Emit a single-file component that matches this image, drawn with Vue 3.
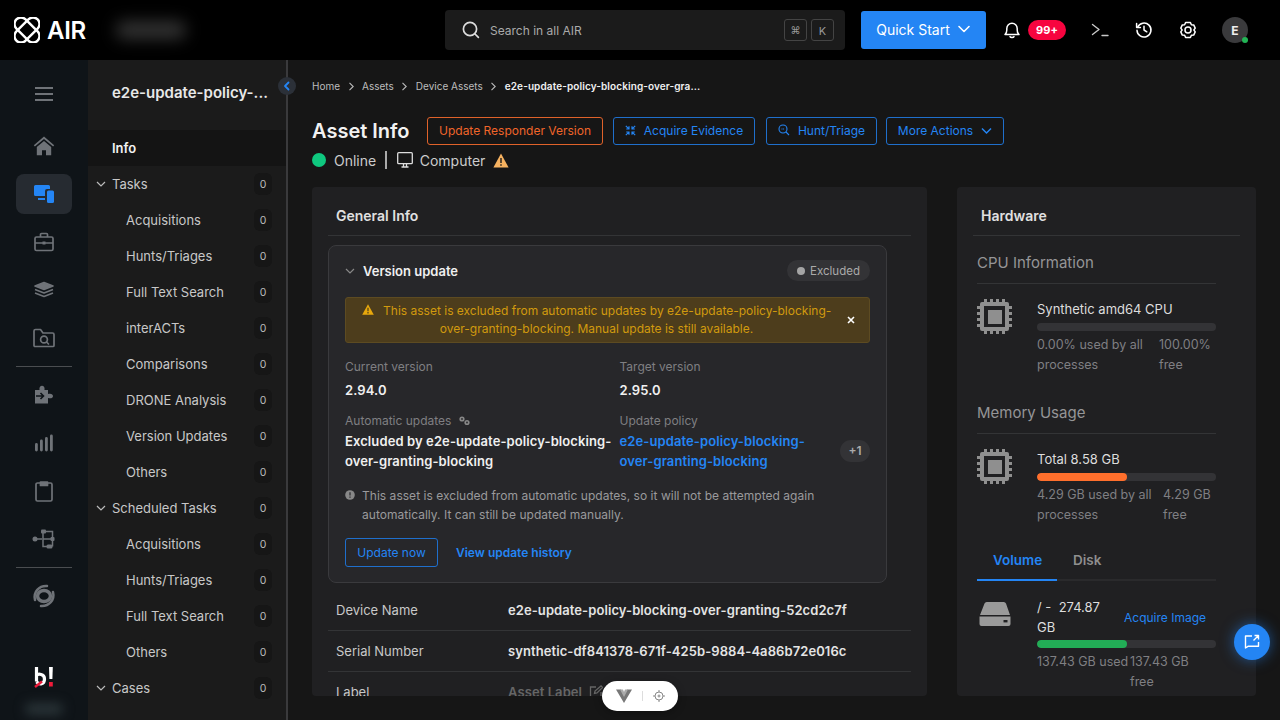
<script setup>
const taskGroups = [
  { title: 'Tasks', items: ['Acquisitions', 'Hunts/Triages', 'Full Text Search', 'interACTs', 'Comparisons', 'DRONE Analysis', 'Version Updates', 'Others'] },
  { title: 'Scheduled Tasks', items: ['Acquisitions', 'Hunts/Triages', 'Full Text Search', 'Others'] },
  { title: 'Cases', items: [] },
]
const crumbs = ['Home', 'Assets', 'Device Assets']
</script>

<template>
  <div class="app">
    <header class="topbar">
      <div class="brand">
        <svg width="26" height="26" viewBox="0 0 26 26" fill="none" stroke="#fff" stroke-width="2.4">
          <rect x="-2" y="6.500" width="30" height="13" rx="6.500" transform="rotate(45 13 13)" />
          <rect x="-2" y="6.500" width="30" height="13" rx="6.500" transform="rotate(-45 13 13)" />
          <path d="M9 13l4-4" stroke="#000" stroke-width="1.600" />
          <path d="M13 17l4-4" stroke="#000" stroke-width="1.600" />
        </svg>
        <span class="brand-name">AIR</span>
      </div>
      <div class="org-blur"></div>
      <div class="search">
        <svg class="search-icon" width="20" height="20" viewBox="0 0 20 20" fill="none" stroke="#ddd" stroke-width="1.7" stroke-linecap="round">
          <circle cx="9" cy="9" r="6.6" /><path d="M14 14l3.4 3.4" />
        </svg>
        <span class="search-text">Search in all AIR</span>
        <kbd class="key">⌘</kbd>
        <kbd class="key key-k">K</kbd>
      </div>
      <button class="quick">
        Quick Start
        <svg width="14" height="14" viewBox="0 0 14 14" fill="none" stroke="#fff" stroke-width="1.6" stroke-linecap="round" stroke-linejoin="round"><path d="M2 4.5L7 9.5L12 4.5" /></svg>
      </button>
      <div class="top-icons">
        <svg class="bell" width="18" height="18" viewBox="0 0 18 18" fill="none" stroke="#fff" stroke-width="1.5" stroke-linejoin="round">
          <path d="M2 13.6c1.2-1 1.8-2 1.8-4.6V7.4a5.2 5.2 0 0 1 10.4 0V9c0 2.6.6 3.6 1.8 4.6z" /><path d="M7 15.6c.6 1.2 3.4 1.2 4 0" stroke-linecap="round" />
        </svg>
        <span class="notif">99+</span>
        <svg class="term" width="18" height="16" viewBox="0 0 18 16" fill="none" stroke="#c8c8c8" stroke-width="1.4" stroke-linecap="round" stroke-linejoin="round"><path d="M1.5 2.5L8 7.5L1.5 12.5" /><path d="M11 13.5h6" /></svg>
        <svg class="hist" width="18" height="18" viewBox="0 0 18 18" fill="none" stroke="#fff" stroke-width="1.5" stroke-linecap="round" stroke-linejoin="round"><path d="M2.6 6.2A7 7 0 1 1 2 9.2" /><path d="M1.6 2.6v3.8h3.8" /><path d="M9 5.2V9l2.8 1.8" /></svg>
        <svg class="gear" width="18" height="18" viewBox="0 0 18 18" fill="none" stroke="#fff" stroke-width="1.5" stroke-linejoin="round"><path d="M6.6 1.6h4.8l1 2.1 2.3.2 1.5 3.2-1.3 1.9 1.3 1.9-1.5 3.2-2.3.2-1 2.1H6.600l-1-2.100-2.300-.2-1.500-3.200L3.100 9 1.800 7.100l1.500-3.200 2.300-.2z" /><circle cx="9" cy="9" r="3" /></svg>
        <div class="avatar">E<i class="avatar-dot"></i></div>
      </div>
    </header>

    <div class="body">
      <nav class="rail">
        <div class="rail-item rail-burger">
          <svg width="20" height="16" viewBox="0 0 20 16" fill="none" stroke="#6f7378" stroke-width="1.8"><path d="M1 2h18M1 8h18M1 14h18" /></svg>
        </div>
        <div class="rail-item">
          <svg width="22" height="20" viewBox="0 0 22 20" fill="#6f7378"><path d="M11 0.500L0.800 9.300l1.100 1.300L11 2.900l9.100 7.700 1.100-1.300z" /><path d="M3.800 11L11 4.900 18.200 11v8.200h-5.200v-5h-4v5H3.800z" /></svg>
        </div>
        <div class="rail-item active">
          <svg width="22" height="20" viewBox="0 0 22 20" fill="#2485f4"><path d="M1 2.500A1.500 1.500 0 0 1 2.500 1h13A1.500 1.500 0 0 1 17 2.500V5h-3a2 2 0 0 0-2 2v5H2.500A1.500 1.500 0 0 1 1 10.500z" /><rect x="5" y="14" width="7" height="2" /><rect x="14" y="6.500" width="7" height="12.500" rx="1.500" /></svg>
        </div>
        <div class="rail-item">
          <svg width="20" height="20" viewBox="0 0 20 20" fill="none" stroke="#6f7378" stroke-width="1.7"><rect x="1" y="5" width="18" height="13.500" rx="1.500" /><path d="M6.500 5V2.500a1 1 0 0 1 1-1h5a1 1 0 0 1 1 1V5M1 11h18" /><path d="M8.500 11h3" stroke-width="3" /></svg>
        </div>
        <div class="rail-item">
          <svg width="20" height="20" viewBox="0 0 20 20" fill="none" stroke="#6f7378" stroke-width="1.600" stroke-linejoin="round"><path d="M10 2.500l9 3.500-9 3.500-9-3.500z" fill="#6f7378" /><path d="M1 9.500l9 3.500 9-3.500M1 13l9 3.500L19 13" /></svg>
        </div>
        <div class="rail-item">
          <svg width="22" height="20" viewBox="0 0 22 20" fill="none" stroke="#6f7378" stroke-width="1.700" stroke-linejoin="round"><path d="M1 3a1.500 1.500 0 0 1 1.500-1.500h5L10 5h9.500A1.500 1.500 0 0 1 21 6.500v11a1 1 0 0 1-1 1H2a1 1 0 0 1-1-1z" /><circle cx="11" cy="11.500" r="3.400" /><path d="M13.500 14l2 2" stroke-linecap="round" /></svg>
        </div>
        <div class="rail-sep"></div>
        <div class="rail-item">
          <svg width="20" height="20" viewBox="0 0 20 20" fill="#6f7378"><path d="M1 5h4.500C5 2 6.500.800 8 .800S11 2 10.500 5H14v4c3-1 5 .300 5 2s-2 3-5 2v5.500H1z" /><path d="M2 11h7M6.500 8l3 3-3 3" fill="none" stroke="#0f1418" stroke-width="1.600" /></svg>
        </div>
        <div class="rail-item">
          <svg width="20" height="20" viewBox="0 0 20 20" fill="#6f7378"><rect x="1" y="10" width="2.800" height="8.500" rx="1.400" /><rect x="6" y="6.500" width="2.800" height="12" rx="1.400" /><rect x="11" y="4" width="2.800" height="14.500" rx="1.400" /><rect x="16" y="1.500" width="2.800" height="17" rx="1.400" /></svg>
        </div>
        <div class="rail-item">
          <svg width="18" height="22" viewBox="0 0 18 22" fill="none" stroke="#6f7378" stroke-width="1.700" stroke-linejoin="round"><path d="M5 3H2.500A1.500 1.500 0 0 0 1 4.500v15A1.500 1.500 0 0 0 2.500 21h13a1.500 1.500 0 0 0 1.500-1.500v-15A1.500 1.500 0 0 0 15.500 3H13" /><path d="M5.500 2h7v3.500h-7z" fill="#6f7378" /></svg>
        </div>
        <div class="rail-item">
          <svg width="24" height="20" viewBox="0 0 24 20" fill="none" stroke="#6f7378" stroke-width="1.500"><path d="M3 10h7M13 2.500h7.500V9M11 2.500V17.500h5M11 10h10M20.500 10v7.500" /><g fill="#6f7378" stroke="none"><circle cx="3" cy="10" r="2.500" /><rect x="9" y="0.500" width="5" height="4" rx="1" /><rect x="18.500" y="8" width="4" height="4" rx="1" /><rect x="14.500" y="15.500" width="6" height="4" rx="1.500" /></g></svg>
        </div>
        <div class="rail-sep"></div>
        <div class="rail-item">
          <svg width="24" height="24" viewBox="0 0 24 24" fill="none" stroke="#6f7378" stroke-linecap="round"><path d="M3 16C1 8 7 1.500 15 2" stroke-width="2.500" /><path d="M21 8c2 8-4 14.500-12 14" stroke-width="2.500" /><ellipse cx="12" cy="12" rx="6.500" ry="5.500" stroke-width="3.500" /></svg>
        </div>
        <div class="rail-logo">
          <svg width="20" height="22" viewBox="0 0 20 22"><path d="M2.500 1v14.500M2.500 9.500c1.500-2 8-2 8 3.500s-5 6-8 2.800" fill="none" stroke="#fff" stroke-width="3.200" /><path d="M15 1h3.800l-.400 12h-3z" fill="#fff" /><rect x="15" y="16" width="3.800" height="4.500" fill="#ef1b3a" /><path d="M1 21l7-5.500" stroke="#ef1b3a" stroke-width="2.400" /></svg>
        </div>
        <div class="rail-blur"></div>
      </nav>

      <aside class="side">
        <div class="side-title">e2e-update-policy-...</div>
        <div class="side-info">Info</div>
        <template v-for="group in taskGroups" :key="group.title">
          <div class="side-row side-group">
            <svg width="10" height="10" viewBox="0 0 10 10" fill="none" stroke="#bbb" stroke-width="1.200"><path d="M1 3l4 4 4-4" /></svg>
            <span class="side-label">{{ group.title }}</span>
            <span class="count">0</span>
          </div>
          <div v-for="item in group.items" :key="item" class="side-row side-child">
            <span class="side-label">{{ item }}</span>
            <span class="count">0</span>
          </div>
        </template>
        <button class="collapse">
          <svg width="8" height="10" viewBox="0 0 8 10" fill="none" stroke="#2485f4" stroke-width="1.800" stroke-linecap="round" stroke-linejoin="round"><path d="M5.500 1.500L2 5l3.500 3.500" /></svg>
        </button>
      </aside>

      <main class="main">
        <div class="crumbs">
          <template v-for="c in crumbs" :key="c">
            <span>{{ c }}</span>
            <svg width="7" height="9" viewBox="0 0 7 9" fill="none" stroke="#bbb" stroke-width="1.100"><path d="M1.500 .8L5.200 4.500 1.500 8.200" /></svg>
          </template>
          <b>e2e-update-policy-blocking-over-gra...</b>
        </div>

        <div class="title-row">
          <h1>Asset Info</h1>
          <button class="btn btn-orange">Update Responder Version</button>
          <button class="btn btn-blue">
            <svg width="11" height="11" viewBox="0 0 11 11" fill="none" stroke="#2485f4" stroke-width="1.200"><path d="M.8 .8l2.800 2.800M4 1.200V4H1.200M10.200 .8L7.400 3.600M7 1.200V4h2.800M.8 10.200l2.800-2.800M4 9.800V7H1.200M10.200 10.200L7.400 7.400M7 9.800V7h2.800" /></svg>
            Acquire Evidence
          </button>
          <button class="btn btn-blue btn-hunt">
            <svg width="12" height="12" viewBox="0 0 12 12" fill="none" stroke="#2485f4" stroke-width="1.100"><circle cx="5" cy="5" r="4" /><path d="M8 8l3 3" /><path d="M3.500 5h3" stroke-dasharray="1 .6" /></svg>
            Hunt/Triage
          </button>
          <button class="btn btn-blue btn-more">
            More Actions
            <svg width="11" height="11" viewBox="0 0 11 11" fill="none" stroke="#2485f4" stroke-width="1.500"><path d="M1 3.500l4.500 4.500L10 3.500" /></svg>
          </button>
        </div>

        <div class="status-row">
          <i class="online-dot"></i>
          <span>Online</span>
          <i class="status-sep"></i>
          <svg width="16" height="16" viewBox="0 0 16 16" fill="none" stroke="#ddd" stroke-width="1.300"><rect x=".7" y=".7" width="14.600" height="11" rx="1" /><path d="M4.500 15h7M6.500 12v2.500M9.500 12v2.500" /></svg>
          <span>Computer</span>
          <svg width="16" height="15" viewBox="0 0 16 15"><path d="M8 .5l7.600 14H.4z" fill="#f6b260" /><path d="M8 5v5M8 11.200v1.500" stroke="#1a1a1a" stroke-width="1.400" /></svg>
        </div>

        <div class="cards">
          <section class="card general">
            <h2 class="card-title">General Info</h2>
            <div class="version-box">
              <div class="version-head">
                <svg width="10" height="10" viewBox="0 0 10 10" fill="none" stroke="#888" stroke-width="1.200"><path d="M1 3l4 4 4-4" /></svg>
                <strong>Version update</strong>
                <span class="pill"><i></i>Excluded</span>
              </div>
              <div class="alert">
                <p>
                  <svg width="12" height="11" viewBox="0 0 12 11"><path d="M6 .3l5.800 10.400H.2z" fill="#e8a80c" /><path d="M6 3.800v3.400M6 8v1.400" stroke="#4b3c1c" stroke-width="1.200" /></svg>
                  This asset is excluded from automatic updates by e2e-update-policy-blocking-over-granting-blocking. Manual update is still available.
                </p>
                <svg class="alert-x" width="8" height="8" viewBox="0 0 8 8" stroke="#fff" stroke-width="1.600"><path d="M1 1l6 6M7 1L1 7" /></svg>
              </div>
              <div class="version-grid">
                <div>
                  <div class="v-label">Current version</div>
                  <div class="v-value">2.94.0</div>
                </div>
                <div>
                  <div class="v-label">Target version</div>
                  <div class="v-value">2.95.0</div>
                </div>
                <div>
                  <div class="v-label">Automatic updates
                    <svg class="cogs" width="11" height="10" viewBox="0 0 11 10" fill="#888"><circle cx="3" cy="3" r="2.600" /><circle cx="8" cy="6.500" r="2.600" /><circle cx="3" cy="3" r=".9" fill="#27272a" /><circle cx="8" cy="6.500" r=".9" fill="#27272a" /></svg>
                  </div>
                  <div class="v-text">Excluded by e2e-update-policy-blocking-over-granting-blocking</div>
                </div>
                <div class="policy">
                  <div class="v-label">Update policy</div>
                  <div class="policy-row">
                    <a class="v-text v-link">e2e-update-policy-blocking-over-granting-blocking</a>
                    <span class="plus">+1</span>
                  </div>
                </div>
              </div>
              <div class="note">
                <svg width="10" height="10" viewBox="0 0 10 10"><circle cx="5" cy="5" r="4.800" fill="#888" /><path d="M5 2.300v3.200M5 6.500v1.300" stroke="#27272a" stroke-width="1.200" /></svg>
                <p>This asset is excluded from automatic updates, so it will not be attempted again automatically. It can still be updated manually.</p>
              </div>
              <div class="version-actions">
                <button class="update-now">Update now</button>
                <a class="history">View update history</a>
              </div>
            </div>
            <div class="info-row">
              <span>Device Name</span><b>e2e-update-policy-blocking-over-granting-52cd2c7f</b>
            </div>
            <div class="info-row">
              <span>Serial Number</span><b>synthetic-df841378-671f-425b-9884-4a86b72e016c</b>
            </div>
            <div class="info-row info-last">
              <span>Label</span>
              <b class="muted">Asset Label
                <svg width="14" height="14" viewBox="0 0 14 14" fill="none" stroke="#666" stroke-width="1.300"><path d="M7 2H1.500v10.500H12V7" /><path d="M5.500 8.500l.5-2.500 6-5 1.500 1.500-5.500 5.500z" /></svg>
              </b>
            </div>
          </section>

          <section class="card hardware">
            <h2 class="card-title">Hardware</h2>
            <div class="hw-inner">
              <h3>CPU Information</h3>
              <div class="hw-item">
                <svg class="chip" width="36" height="36" viewBox="0 0 36 36" fill="#8f8f8f"><path fill-rule="evenodd" d="M3 5a2 2 0 0 1 2-2h25a2 2 0 0 1 2 2v25a2 2 0 0 1-2 2H5a2 2 0 0 1-2-2zM7 7v21h21V7z" /><rect x="11" y="11" width="14" height="14" /><path d="M7 0h3v4H7zM13 0h3v4h-3zM19 0h3v4h-3zM25 0h3v4h-3zM7 31h3v4H7zM13 31h3v4h-3zM19 31h3v4h-3zM25 31h3v4h-3zM0 7h4v3H0zM0 13h4v3H0zM0 19h4v3H0zM0 25h4v3H0zM31 7h4v3h-4zM31 13h4v3h-4zM31 19h4v3h-4zM31 25h4v3h-4z" /></svg>
                <div class="hw-detail">
                  <div class="hw-name">Synthetic amd64 CPU</div>
                  <div class="bar"></div>
                  <div class="hw-stats">
                    <span class="stat-a">0.00% used by all processes</span>
                    <span class="stat-b">100.00% free</span>
                  </div>
                </div>
              </div>
              <h3 class="mem-title">Memory Usage</h3>
              <div class="hw-item">
                <svg class="chip" width="36" height="36" viewBox="0 0 36 36" fill="#8f8f8f"><path fill-rule="evenodd" d="M3 5a2 2 0 0 1 2-2h25a2 2 0 0 1 2 2v25a2 2 0 0 1-2 2H5a2 2 0 0 1-2-2zM7 7v21h21V7z" /><rect x="11" y="11" width="14" height="14" /><path d="M7 0h3v4H7zM13 0h3v4h-3zM19 0h3v4h-3zM25 0h3v4h-3zM7 31h3v4H7zM13 31h3v4h-3zM19 31h3v4h-3zM25 31h3v4h-3zM0 7h4v3H0zM0 13h4v3H0zM0 19h4v3H0zM0 25h4v3H0zM31 7h4v3h-4zM31 13h4v3h-4zM31 19h4v3h-4zM31 25h4v3h-4z" /></svg>
                <div class="hw-detail">
                  <div class="hw-name">Total 8.58 GB</div>
                  <div class="bar"><i class="fill-orange" :style="{ width: '50%' }"></i></div>
                  <div class="hw-stats">
                    <span class="stat-mem">4.29 GB used by all processes</span>
                    <span class="stat-free">4.29 GB free</span>
                  </div>
                </div>
              </div>
              <div class="tabs">
                <span class="tab tab-on">Volume</span>
                <span class="tab">Disk</span>
              </div>
              <div class="volume">
                <svg class="drive" width="32" height="26" viewBox="0 0 32 26" fill="#9a9a9a"><path d="M5.500 2.500A2.500 2.500 0 0 1 8 1h16.500A2.500 2.500 0 0 1 27 2.500l4 11.500H1z" /><path d="M.500 15.500h31V23a2 2 0 0 1-2 2h-27a2 2 0 0 1-2-2z" /><rect x="24.500" y="19" width="4" height="2.400" fill="#202022" /></svg>
                <div class="vol-detail">
                  <div class="vol-head">
                    <div class="vol-name">/ -&nbsp; 274.87 GB</div>
                    <a class="acquire">Acquire Image</a>
                  </div>
                  <div class="bar"><i class="fill-green" :style="{ width: '50%' }"></i></div>
                  <div class="hw-stats vol-stats">
                    <span class="vol-used">137.43 GB used</span>
                    <span class="vol-free">137.43 GB free</span>
                  </div>
                </div>
              </div>
            </div>
          </section>
        </div>
      </main>
    </div>

    <div class="dev-pill">
      <svg width="16" height="14" viewBox="0 0 16 14"><path d="M0 .5h5L8 6l3-5.500h5L8 14z" fill="#777" /><path d="M4 .5h3L8 3l1-2.500h3L8 8z" fill="#aaa" /></svg>
      <i class="dev-sep"></i>
      <svg width="12" height="12" viewBox="0 0 12 12" fill="none" stroke="#888" stroke-width="1"><circle cx="6" cy="6" r="4" /><circle cx="6" cy="6" r="1" /><path d="M6 0v2M6 10v2M0 6h2M10 6h2" /></svg>
    </div>
    <button class="chat">
      <svg width="16" height="16" viewBox="0 0 16 16" fill="none" stroke="#fff" stroke-width="1.400" stroke-linejoin="round"><path d="M8 2H1.500v12L4 12.300h10.500V8" /><path d="M10.500 1.500h4v4M14.500 1.500L9.500 6.500" /></svg>
    </button>
  </div>
</template>

<style>
html, body { margin: 0; background: #161616; }
</style>

<style scoped>
.app {
  position: relative;
  width: 1280px;
  height: 720px;
  overflow: hidden;
  font-family: Inter, "Liberation Sans", sans-serif;
  color: #ddd;
  background: #161616;
}
button { font-family: inherit; cursor: pointer; }
h1, h2, h3, p { margin: 0; }

.topbar {
  height: 60px;
  background: #000;
  display: flex;
  align-items: center;
}
.brand { display: flex; align-items: center; gap: 7px; width: 110px; padding-left: 14px; box-sizing: border-box; }
.brand-name { font-size: 24px; font-weight: 600; color: #fff; letter-spacing: -0.3px; }
.org-blur { width: 70px; height: 18px; margin-left: 6px; background: #333; border-radius: 8px; filter: blur(8px); }
.search {
  margin-left: 259px;
  width: 400px;
  height: 40px;
  box-sizing: border-box;
  background: #1b1b1b;
  border-radius: 4px;
  display: flex;
  align-items: center;
  padding: 0 11px 0 16px;
}
.search-text { margin-left: 9px; font-size: 12px; color: #aaa; flex: 1; }
.key {
  width: 23px;
  height: 22px;
  border: 1px solid #444;
  border-radius: 3px;
  display: flex;
  align-items: center;
  justify-content: center;
  font-family: inherit;
  font-size: 10px;
  color: #999;
  margin-left: 4px;
  box-sizing: border-box;
}
.key-k { font-size: 11px; padding-top: 2px; }
.quick {
  margin-left: 16px;
  width: 125px;
  height: 38px;
  background: #2485f4;
  border: 0;
  border-radius: 3px;
  color: #fff;
  font-size: 14px;
  display: flex;
  align-items: center;
  justify-content: center;
  gap: 7px;
  padding: 0 0 2px;
}
.top-icons { display: flex; align-items: center; margin-left: 17px; }
.notif {
  margin-left: 7px;
  width: 38px;
  height: 20px;
  border-radius: 10px;
  background: #f7043f;
  color: #fff;
  font-size: 11px;
  font-weight: 700;
  display: flex;
  align-items: center;
  justify-content: center;
}
.term { margin-left: 25px; }
.hist { margin-left: 26px; }
.gear { margin-left: 26px; }
.avatar {
  position: relative;
  margin-left: 25px;
  width: 26px;
  height: 26px;
  border-radius: 50%;
  background: #3a3a3c;
  color: #eee;
  font-size: 12px;
  font-weight: 700;
  display: flex;
  align-items: center;
  justify-content: center;
}
.avatar-dot { position: absolute; right: 0; bottom: 0; width: 6px; height: 6px; border-radius: 50%; background: #22b455; }

.body { display: flex; height: 660px; }
.rail {
  position: relative;
  width: 88px;
  flex: none;
  background: #0f1418;
  padding-top: 10px;
  box-sizing: border-box;
  display: flex;
  flex-direction: column;
  align-items: center;
  overflow: hidden;
}
.rail-item { width: 56px; height: 40px; margin: 4px 0; display: flex; align-items: center; justify-content: center; border-radius: 8px; flex: none; }
.rail-burger { margin-bottom: 8px; }
.rail-item.active { background: #262b31; }
.rail-sep { width: 56px; height: 1px; margin: 4px 0; background: #4a4d50; flex: none; }
.rail-logo { margin-top: auto; margin-bottom: 32px; height: 22px; }
.rail-blur { position: absolute; left: 26px; bottom: 6px; width: 36px; height: 10px; background: #2f3a3e; filter: blur(6px); }

.side {
  position: relative;
  width: 200px;
  flex: none;
  background: #1b1b1b;
  border-right: 2px solid #3a3a3c;
  box-sizing: border-box;
}
.side-title {
  height: 70px;
  padding: 0 0 6px 24px;
  box-sizing: border-box;
  display: flex;
  align-items: center;
  font-size: 15px;
  font-weight: 600;
  color: #e8e8e8;
}
.side-info {
  height: 36px;
  background: #141414;
  padding-left: 24px;
  display: flex;
  align-items: center;
  font-size: 13px;
  font-weight: 600;
  color: #f2f2f2;
}
.side-row { height: 36px; display: flex; align-items: center; font-size: 13px; color: #c8c8c8; padding-right: 14px; }
.side-group { padding-left: 8px; gap: 6px; }
.side-child { padding-left: 38px; }
.side-label { flex: 1; }
.count {
  width: 18px;
  height: 22px;
  border-radius: 6px;
  background: #161616;
  color: #bbb;
  font-size: 10.500px;
  display: flex;
  align-items: center;
  justify-content: center;
}
.collapse {
  position: absolute;
  top: 17px;
  right: -10px;
  width: 18px;
  height: 18px;
  border: 0;
  padding: 0;
  border-radius: 50%;
  background: #2b3038;
  display: flex;
  align-items: center;
  justify-content: center;
}

.main { flex: 1; min-width: 0; padding: 0 24px 24px 24px; box-sizing: border-box; display: flex; flex-direction: column; }
.crumbs { height: 52px; display: flex; align-items: center; gap: 7.500px; font-size: 10px; color: #bdbdbd; }
.crumbs b { color: #f0f0f0; font-weight: 600; letter-spacing: .1px; }
.title-row { display: flex; align-items: center; height: 28px; margin-top: 5px; }
.title-row h1 { font-size: 20px; font-weight: 600; color: #f2f2f2; width: 115px; flex: none; }
.btn {
  height: 28px;
  border-radius: 3px;
  background: transparent;
  font-size: 12px;
  display: flex;
  align-items: center;
  justify-content: center;
  gap: 8px;
  padding: 0 0 2px;
  box-sizing: border-box;
}
.btn-orange { width: 176px; border: 1px solid #e0622a; color: #f0652a; }
.btn-blue { width: 142px; border: 1px solid #1f6fcc; color: #2485f4; margin-left: 10px; }
.btn-hunt { width: 111px; margin-left: 11px; }
.btn-more { width: 118px; margin-left: 9px; }
.status-row { display: flex; align-items: center; height: 22px; margin-top: 4px; font-size: 14px; color: #ccc; }
.online-dot { width: 14px; height: 14px; border-radius: 50%; background: #0fc87f; margin-right: 8px; }
.status-sep { width: 1.500px; height: 18px; background: #aaa; margin: 0 10px 0 9px; }
.status-row svg:first-of-type { margin-right: 7px; }
.status-row svg:last-of-type { margin: 0 0 0 8px; }

.cards { display: flex; gap: 30px; margin-top: 16px; flex: 1; min-height: 0; }
.card { background: #202022; border-radius: 4px; overflow: hidden; padding: 0 16px; box-sizing: border-box; }
.general { width: 615px; }
.hardware { width: 299px; }
.card-title {
  height: 49px;
  box-sizing: border-box;
  border-bottom: 1px solid #333436;
  padding: 9px 8px 0;
  display: flex;
  align-items: center;
  font-size: 14px;
  font-weight: 600;
  color: #e0e0e0;
}
.version-box {
  width: 559px;
  box-sizing: border-box;
  margin-top: 9px;
  height: 338px;
  background: #27272a;
  border: 1px solid #3a3a3d;
  border-radius: 8px;
  padding: 0 16px;
}
.version-head { display: flex; align-items: center; height: 51px; gap: 8px; padding-bottom: 2px; box-sizing: border-box; }
.version-head strong { font-size: 13px; font-weight: 600; color: #f0f0f0; flex: 1; }
.pill {
  height: 21px;
  width: 83px;
  border-radius: 11px;
  background: #333336;
  font-size: 11.500px;
  color: #aaa;
  display: flex;
  align-items: center;
  justify-content: center;
  gap: 5px;
}
.pill i { width: 8px; height: 8px; border-radius: 50%; background: #a5a5a5; }
.alert {
  position: relative;
  box-sizing: border-box;
  height: 46px;
  background: #4d3d1c;
  border: 1px solid #5d4b22;
  border-radius: 3px;
  display: flex;
  align-items: center;
  padding: 0 36px 0 14px;
  color: #d19a0e;
  font-size: 12px;
  line-height: 18px;
  text-align: center;
}
.alert p svg { margin-right: 6px; }
.alert-x { position: absolute; right: 14px; top: 18px; }
.version-grid { display: grid; grid-template-columns: 274.500px 1fr; margin-top: 15px; row-gap: 13px; }
.v-label { font-size: 12px; color: #7f7f82; line-height: 18px; }
.v-value { font-size: 13px; font-weight: 600; letter-spacing: .1px; color: #f0f0f0; margin-top: 5px; line-height: 18px; }
.v-text { font-size: 13px; font-weight: 600; letter-spacing: .1px; color: #f0f0f0; line-height: 20px; margin-top: 1px; display: block; }
.cogs { margin-left: 4px; vertical-align: -1px; }
.policy-row { display: flex; align-items: center; justify-content: space-between; }
.v-link { color: #2485f4; width: 205px; }
.plus {
  width: 30px;
  height: 22px;
  border-radius: 11px;
  background: #333336;
  color: #aaa;
  font-size: 12px;
  font-weight: 600;
  display: flex;
  align-items: center;
  justify-content: center;
}
.note { display: flex; gap: 7px; margin-top: 15px; font-size: 12px; letter-spacing: .03px; line-height: 19px; color: #9a9a9c; }
.note svg { flex: none; margin-top: 4px; }
.note p { width: 470px; }
.version-actions { display: flex; align-items: center; margin-top: 14px; gap: 18px; }
.update-now {
  width: 93px;
  height: 29px;
  background: transparent;
  border: 1px solid #1f6fcc;
  border-radius: 3px;
  color: #2485f4;
  font-size: 12px;
  padding: 0;
}
.history { font-size: 12px; font-weight: 600; color: #2485f4; }
.info-row {
  height: 40.500px;
  box-sizing: border-box;
  border-bottom: 1px solid #333436;
  display: flex;
  align-items: center;
  padding-left: 8px;
  font-size: 13px;
  color: #c8c8c8;
}
.info-row span { width: 172px; }
.info-row b { font-size: 13px; font-weight: 600; letter-spacing: .08px; color: #e4e4e4; display: flex; align-items: center; gap: 7px; }
.info-row b.muted { color: #666; }
.info-last { border-bottom: 0; }
.version-box + .info-row { height: 48px; padding-top: 6px; }

.hw-inner { padding: 0 4px; width: 239px; box-sizing: content-box; }
.hw-inner h3 {
  height: 48px;
  padding-top: 6px;
  width: 239px;
  box-sizing: border-box;
  border-bottom: 1px solid #333436;
  font-size: 15px;
  font-weight: 400;
  color: #959597;
  display: flex;
  align-items: center;
}
.hw-item { display: flex; gap: 24px; padding-top: 15px; }
.chip { flex: none; }
.hw-detail { width: 180px; font-size: 13px; }
.hw-name { color: #ddd; line-height: 20px; }
.bar { height: 8px; border-radius: 4px; background: #333336; margin-top: 4px; overflow: hidden; }
.bar i { display: block; height: 100%; border-radius: 4px; }
.fill-orange { background: #ff6f2c; }
.fill-green { background: #22ad56; }
.hw-stats { display: flex; justify-content: space-between; font-size: 12.500px; line-height: 20px; color: #7f7f82; margin-top: 4px; }
.stat-a { width: 118px; }
.stat-b { width: 57px; }
.stat-mem { width: 122px; }
.stat-free { width: 53px; }
.hw-inner h3.mem-title { margin-top: 11px; }
.tabs { display: flex; height: 54px; border-bottom: 2px solid #2a2a2c; }
.tab { width: 80px; display: flex; align-items: center; padding: 16px 0 0 16px; box-sizing: border-box; font-size: 13.500px; font-weight: 600; color: #8f8f8f; height: 54px; }
.tab-on { color: #2485f4; border-bottom: 2px solid #2485f4; height: 56px; }
.volume { display: flex; padding-top: 16px; }
.drive { flex: none; margin: 4px 26px 0 2px; }
.vol-detail { width: 179px; font-size: 13px; }
.vol-detail .bar { margin-top: 3px; }
.vol-head { display: flex; align-items: center; }
.vol-name { width: 80px; margin-right: 7px; line-height: 20px; color: #ddd; }
.acquire { font-size: 12px; color: #2485f4; }
.vol-stats { justify-content: flex-start; }
.vol-used { width: 93px; }
.vol-free { width: 80px; }

.dev-pill {
  position: absolute;
  left: 602px;
  top: 681px;
  width: 76px;
  height: 30px;
  border-radius: 15px;
  background: #fff;
  box-shadow: 0 2px 8px rgba(0,0,0,.3);
  display: flex;
  align-items: center;
  justify-content: center;
  gap: 10px;
}
.dev-sep { width: 1px; height: 10px; background: #ddd; }
.chat {
  position: absolute;
  left: 1234px;
  top: 624px;
  width: 36px;
  height: 36px;
  border: 0;
  padding: 0;
  border-radius: 50%;
  background: #2485f4;
  box-shadow: 0 0 14px rgba(36,133,244,.55);
  display: flex;
  align-items: center;
  justify-content: center;
}
</style>
